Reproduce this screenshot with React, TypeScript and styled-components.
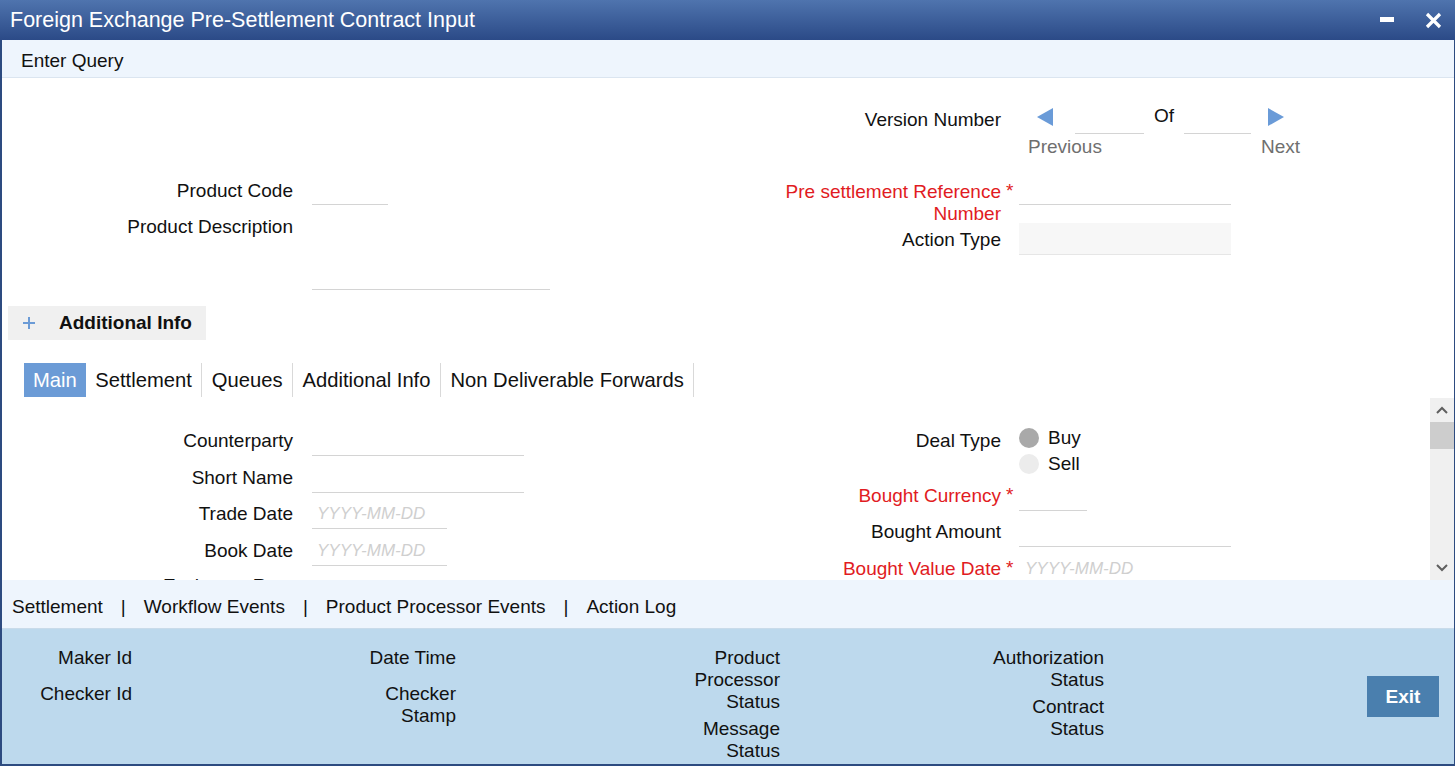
import React from 'react'
import styled, { createGlobalStyle } from 'styled-components'

const GlobalStyle = createGlobalStyle`
    html, body {
        margin: 0;
        padding: 0;
        background: #fff;
    }
    body {
        font-family: "Liberation Sans", Arial, sans-serif;
        color: #111;
    }
    * {
        box-sizing: border-box;
    }
`

const Window = styled.div`
    width: 1455px;
    height: 766px;
    display: flex;
    flex-direction: column;
    overflow: hidden;
    background: #fff;
`

const TitleBar = styled.div`
    height: 40px;
    flex: none;
    display: flex;
    align-items: center;
    justify-content: space-between;
    padding: 0 13px 0 10px;
    background: linear-gradient(to bottom, #4f74ae, #2b4a87);
    color: #fff;
    font-size: 21.5px;
`

const WindowControls = styled.div`
    display: flex;
    align-items: center;
    gap: 31px;
`

const Body = styled.div`
    flex: 1;
    display: flex;
    flex-direction: column;
    min-height: 0;
    border-left: 2px solid #2d4b80;
    border-right: 1px solid #2d4b80;
    border-bottom: 2px solid #2d4b80;
`

const Toolbar = styled.div`
    height: 38px;
    flex: none;
    display: flex;
    align-items: center;
    padding-left: 19px;
    padding-top: 5px;
    background: #eef5fd;
    border-bottom: 1px solid #dbe5f0;
    font-size: 19px;
`

const Header = styled.div`
    height: 228px;
    flex: none;
    display: grid;
    grid-template-columns: 718px 1fr;
`

const Column = styled.div<{ $top: number; $gap?: number }>`
    display: flex;
    flex-direction: column;
    padding-top: ${p => p.$top}px;
    gap: ${p => p.$gap ?? 0}px;
`

const Row = styled.div<{ $height?: number; $center?: boolean }>`
    display: flex;
    align-items: ${p => (p.$center ? 'center' : 'flex-start')};
    flex: none;
    height: ${p => (p.$height ? `${p.$height}px` : 'auto')};
`

const Label = styled.div<{ $width: number; $required?: boolean }>`
    width: ${p => p.$width}px;
    flex: none;
    text-align: right;
    font-size: 19px;
    line-height: 22px;
    padding-top: 1px;
    color: ${p => (p.$required ? '#e11b22' : '#111')};
`

const Marker = styled.div<{ $width: number }>`
    width: ${p => p.$width}px;
    flex: none;
    padding-left: 5px;
    font-size: 19px;
    line-height: 22px;
    color: #e11b22;
`

const Input = styled.div<{ $width: number; $height?: number }>`
    width: ${p => p.$width}px;
    height: ${p => p.$height ?? 27}px;
    flex: none;
    border-bottom: 1px solid #d4d4d4;
    padding-left: 5px;
    font-size: 17px;
    line-height: 24px;
    font-style: italic;
    color: #cfcfcf;
`

const ReadOnlyBox = styled.div<{ $width: number }>`
    width: ${p => p.$width}px;
    height: 32px;
    background: #f7f7f7;
    border-bottom: 1px solid #e6e6e6;
`

const VersionNav = styled.div`
    display: flex;
    flex-direction: column;
`

const NavTop = styled.div`
    display: flex;
    align-items: flex-start;
    padding-left: 36px;
`

const NavText = styled.div<{ $left: number; $muted?: boolean }>`
    margin-left: ${p => p.$left}px;
    font-size: 19px;
    line-height: 22px;
    color: ${p => (p.$muted ? '#6f6f6f' : '#111')};
`

const NavInput = styled.div<{ $left: number; $width: number }>`
    margin-left: ${p => p.$left}px;
    width: ${p => p.$width}px;
    height: 26px;
    border-bottom: 1px solid #d4d4d4;
`

const NavArrow = styled.svg<{ $left: number }>`
    margin-left: ${p => p.$left}px;
    width: 16px;
    height: 18px;
    flex: none;
`

const NavBottom = styled.div`
    display: flex;
    margin-top: 2px;
`

const Collapsible = styled.div`
    height: 34px;
    width: 198px;
    margin-left: 6px;
    flex: none;
    display: flex;
    align-items: center;
    padding-left: 14px;
    background: #f0f0f0;
    font-size: 19px;
    font-weight: bold;
`

const PlusIcon = styled.svg`
    width: 14px;
    height: 14px;
    margin-right: 23px;
`

const Tabs = styled.div`
    display: flex;
    height: 34px;
    flex: none;
    margin: 23px 0 1px 22px;
`

const Tab = styled.div<{ $active?: boolean }>`
    padding: 0 ${p => (p.$active ? 9 : 9.5)}px;
    font-size: 20.2px;
    line-height: 35px;
    background: ${p => (p.$active ? '#6b9bd6' : 'transparent')};
    color: ${p => (p.$active ? '#fff' : '#111')};
    border-right: ${p => (p.$active ? 'none' : '1px solid #d9d9d9')};
`

const ScrollArea = styled.div`
    height: 182px;
    flex: none;
    display: flex;
`

const ScrollContent = styled.div`
    flex: 1;
    overflow: hidden;
    display: grid;
    grid-template-columns: 718px 1fr;
    align-items: start;
`

const Scrollbar = styled.div`
    width: 24px;
    flex: none;
    display: flex;
    flex-direction: column;
    background: #f0f0f0;
`

const ScrollButton = styled.div`
    height: 24px;
    display: flex;
    align-items: center;
    justify-content: center;
`

const ScrollThumb = styled.div`
    height: 27px;
    background: #cdcdcd;
`

const ScrollTrack = styled.div`
    flex: 1;
`

const RadioGroup = styled.div`
    display: flex;
    flex-direction: column;
    margin-top: -4px;
`

const RadioItem = styled.div`
    height: 26px;
    display: flex;
    align-items: center;
    font-size: 19px;
`

const RadioDot = styled.span<{ $checked?: boolean }>`
    width: 20px;
    height: 20px;
    border-radius: 50%;
    margin-right: 9px;
    background: ${p => (p.$checked ? '#a9a9a9' : '#ececec')};
`

const LinkBar = styled.div`
    height: 49px;
    flex: none;
    display: flex;
    align-items: center;
    padding: 5px 0 0 10px;
    background: #eef5fd;
    border-bottom: 1px solid #c9dbea;
    font-size: 19px;
`

const LinkSep = styled.span`
    margin: 0 18px;
`

const AuditPanel = styled.div`
    flex: 1;
    display: flex;
    align-items: center;
    background: #bdd9ed;
`

const AuditColumn = styled.div`
    width: 324px;
    align-self: stretch;
    display: flex;
    flex-direction: column;
    gap: 5px;
    padding-top: 18px;
`

const AuditLabel = styled.div`
    width: 130px;
    min-height: 31px;
    text-align: right;
    font-size: 19px;
    line-height: 22px;
`

const ExitButton = styled.div`
    margin-left: auto;
    margin-right: 15px;
    width: 72px;
    height: 41px;
    display: flex;
    align-items: center;
    justify-content: center;
    background: #4a7fae;
    color: #fff;
    font-size: 19px;
    font-weight: bold;
`

const LEFT = 291
const RIGHT = 281

const Chevron = ({ up }: { up?: boolean }) => (
    <svg width="12" height="8" viewBox="0 0 12 8">
        <polyline
            points={up ? '1,7 6,2 11,7' : '1,1 6,6 11,1'}
            fill="none"
            stroke="#5f5f5f"
            strokeWidth="2"
        />
    </svg>
)

const Arrow = ({ left, dir }: { left: number; dir: 'prev' | 'next' }) => (
    <NavArrow $left={left} viewBox="0 0 16 18">
        <polygon points={dir === 'prev' ? '16,0 16,18 0,9' : '0,0 0,18 16,9'} fill="#6a9bd8" />
    </NavArrow>
)

export default function App() {
    return (
        <Window>
            <GlobalStyle />
            <TitleBar>
                <span>Foreign Exchange Pre-Settlement Contract Input</span>
                <WindowControls>
                    <svg width="14" height="6" viewBox="0 0 14 6">
                        <rect x="0" y="0" width="14" height="5" fill="#fff" />
                    </svg>
                    <svg width="17" height="17" viewBox="0 0 17 17">
                        <path d="M2 2 L15 15 M15 2 L2 15" stroke="#fff" strokeWidth="3.2" />
                    </svg>
                </WindowControls>
            </TitleBar>
            <Body>
                <Toolbar>Enter Query</Toolbar>
                <Header>
                    <Column $top={101} $gap={10}>
                        <Row>
                            <Label $width={LEFT}>Product Code</Label>
                            <Marker $width={19} />
                            <Input $width={76} $height={26} />
                        </Row>
                        <Row>
                            <Label $width={LEFT}>Product Description</Label>
                            <Marker $width={19} />
                            <Input $width={238} $height={75} />
                        </Row>
                    </Column>
                    <Column $top={30}>
                        <Row>
                            <Label $width={RIGHT}>Version Number</Label>
                            <VersionNav>
                                <NavTop>
                                    <Arrow left={0} dir="prev" />
                                    <NavInput $left={22} $width={69} />
                                    <NavText $left={10} style={{ marginTop: -3 }}>Of</NavText>
                                    <NavInput $left={10} $width={67} />
                                    <Arrow left={17} dir="next" />
                                </NavTop>
                                <NavBottom>
                                    <NavText $left={27} $muted>Previous</NavText>
                                    <NavText $left={159} $muted>Next</NavText>
                                </NavBottom>
                            </VersionNav>
                        </Row>
                        <Row style={{ marginTop: 22 }}>
                            <Label $width={RIGHT} $required>
                                Pre settlement Reference
                                <br />
                                Number
                            </Label>
                            <Marker $width={18}>*</Marker>
                            <Input $width={212} $height={25} />
                        </Row>
                        <Row $height={32} $center style={{ marginTop: -2 }}>
                            <Label $width={RIGHT}>Action Type</Label>
                            <Marker $width={18} />
                            <ReadOnlyBox $width={212} />
                        </Row>
                    </Column>
                </Header>
                <Collapsible>
                    <PlusIcon viewBox="0 0 14 14">
                        <path d="M7 1 V13 M1 7 H13" stroke="#6b9bd6" strokeWidth="2" />
                    </PlusIcon>
                    Additional Info
                </Collapsible>
                <Tabs>
                    <Tab $active>Main</Tab>
                    <Tab>Settlement</Tab>
                    <Tab>Queues</Tab>
                    <Tab>Additional Info</Tab>
                    <Tab>Non Deliverable Forwards</Tab>
                </Tabs>
                <ScrollArea>
                    <ScrollContent>
                        <Column $top={31} $gap={9.5}>
                            <Row>
                                <Label $width={LEFT}>Counterparty</Label>
                                <Marker $width={19} />
                                <Input $width={212} />
                            </Row>
                            <Row>
                                <Label $width={LEFT}>Short Name</Label>
                                <Marker $width={19} />
                                <Input $width={212} />
                            </Row>
                            <Row>
                                <Label $width={LEFT}>Trade Date</Label>
                                <Marker $width={19} />
                                <Input $width={135}>YYYY-MM-DD</Input>
                            </Row>
                            <Row>
                                <Label $width={LEFT}>Book Date</Label>
                                <Marker $width={19} />
                                <Input $width={135}>YYYY-MM-DD</Input>
                            </Row>
                            <Row>
                                <Label $width={LEFT} style={{ paddingTop: 0 }}>Exchange Rate</Label>
                                <Marker $width={19} />
                                <Input $width={212} />
                            </Row>
                        </Column>
                        <Column $top={31} $gap={9.5}>
                            <Row $height={45}>
                                <Label $width={RIGHT}>Deal Type</Label>
                                <Marker $width={18} />
                                <RadioGroup>
                                    <RadioItem>
                                        <RadioDot $checked />
                                        Buy
                                    </RadioItem>
                                    <RadioItem>
                                        <RadioDot />
                                        Sell
                                    </RadioItem>
                                </RadioGroup>
                            </Row>
                            <Row>
                                <Label $width={RIGHT} $required>Bought Currency</Label>
                                <Marker $width={18}>*</Marker>
                                <Input $width={68} />
                            </Row>
                            <Row>
                                <Label $width={RIGHT}>Bought Amount</Label>
                                <Marker $width={18} />
                                <Input $width={212} />
                            </Row>
                            <Row>
                                <Label $width={RIGHT} $required>Bought Value Date</Label>
                                <Marker $width={18}>*</Marker>
                                <Input $width={212} style={{ paddingLeft: 6 }}>YYYY-MM-DD</Input>
                            </Row>
                        </Column>
                    </ScrollContent>
                    <Scrollbar>
                        <ScrollButton>
                            <Chevron up />
                        </ScrollButton>
                        <ScrollThumb />
                        <ScrollTrack />
                        <ScrollButton>
                            <Chevron />
                        </ScrollButton>
                    </Scrollbar>
                </ScrollArea>
                <LinkBar>
                    <span>Settlement</span>
                    <LinkSep>|</LinkSep>
                    <span>Workflow Events</span>
                    <LinkSep>|</LinkSep>
                    <span>Product Processor Events</span>
                    <LinkSep>|</LinkSep>
                    <span>Action Log</span>
                </LinkBar>
                <AuditPanel>
                    <AuditColumn>
                        <AuditLabel>Maker Id</AuditLabel>
                        <AuditLabel>Checker Id</AuditLabel>
                    </AuditColumn>
                    <AuditColumn>
                        <AuditLabel>Date Time</AuditLabel>
                        <AuditLabel>
                            Checker
                            <br />
                            Stamp
                        </AuditLabel>
                    </AuditColumn>
                    <AuditColumn>
                        <AuditLabel>
                            Product
                            <br />
                            Processor
                            <br />
                            Status
                        </AuditLabel>
                        <AuditLabel>
                            Message
                            <br />
                            Status
                        </AuditLabel>
                    </AuditColumn>
                    <AuditColumn>
                        <AuditLabel>
                            Authorization
                            <br />
                            Status
                        </AuditLabel>
                        <AuditLabel>
                            Contract
                            <br />
                            Status
                        </AuditLabel>
                    </AuditColumn>
                    <ExitButton>Exit</ExitButton>
                </AuditPanel>
            </Body>
        </Window>
    )
}
